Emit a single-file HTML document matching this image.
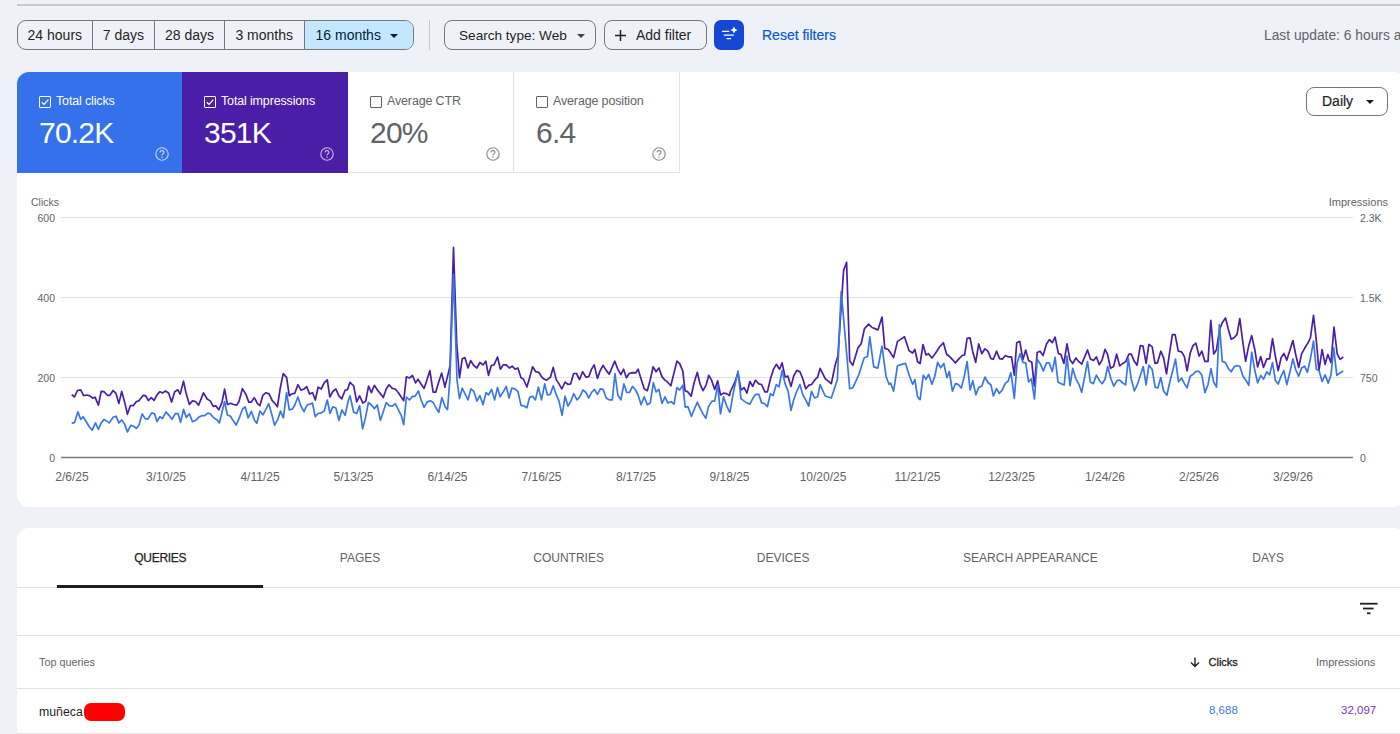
<!DOCTYPE html>
<html><head><meta charset="utf-8">
<style>
*{box-sizing:border-box;margin:0;padding:0}
html,body{width:1400px;height:734px;overflow:hidden;background:#eef1f8;font-family:"Liberation Sans",sans-serif;color:#1f1f1f}
.a{position:absolute}
.topline{left:17px;top:4px;width:1383px;height:2px;background:#c8cbd1}
.seg{left:17px;top:20px;height:30px;width:397px;border:1px solid #747775;border-radius:9px;overflow:hidden;display:flex;background:#eef1f8}
.seg div{height:100%;display:flex;align-items:center;justify-content:center;font-size:14px;color:#1f1f1f;border-right:1px solid #747775}
.seg div:last-child{border-right:none;background:#c2e7ff;color:#001d35}
.vsep{left:429px;top:20px;width:1px;height:30px;background:#c4c7c5}
.btn{top:20px;height:30px;border:1px solid #747775;border-radius:8px;font-size:14px;display:flex;align-items:center;color:#1f1f1f}
.card{left:17px;top:72px;width:1388px;height:435px;background:#fff;border-radius:12px}
.m{top:72px;height:101px;width:166px}
.m .cb{position:absolute;left:22px;top:24px;width:12px;height:12px;border:1.3px solid #fff;border-radius:1px}
.m .lbl{position:absolute;left:39px;top:22px;font-size:12.5px;letter-spacing:-0.15px}
.m .val{position:absolute;left:22px;top:44px;font-size:30px;letter-spacing:-0.8px}
.tab{top:551px;font-size:12px;color:#5f6368;transform:translateX(-50%)}
.hl{height:1px;background:#e3e3e3}
</style></head><body>
<div class="a topline"></div>
<div class="a seg">
  <div style="width:75px">24 hours</div>
  <div style="width:63px">7 days</div>
  <div style="width:70px">28 days</div>
  <div style="width:80px">3 months</div>
  <div style="width:109px;justify-content:flex-start;padding-left:11px">16 months<span style="position:absolute;left:372px;top:13px;width:0;height:0;border-left:4px solid transparent;border-right:4px solid transparent;border-top:4px solid #001d35"></span></div>
</div>
<div class="a vsep"></div>
<div class="a btn" style="left:444px;width:152px;padding-left:14px;font-size:13.6px">Search type: Web<span style="position:absolute;left:132px;top:13px;border-left:4px solid transparent;border-right:4px solid transparent;border-top:4px solid #444"></span></div>
<div class="a btn" style="left:604px;width:103px;padding-left:31px">Add filter<svg style="position:absolute;left:9px;top:8px" width="13" height="13"><path d="M6.5 1 V12 M1 6.5 H12" stroke="#1f1f1f" stroke-width="1.5"/></svg></div>
<div class="a" style="left:714px;top:20px;width:30px;height:30px;border-radius:7px;background:#1447d4"><svg width="30" height="30" style="position:absolute;left:0;top:0"><g stroke="#fff" stroke-width="1.4" stroke-linecap="round"><line x1="8.6" y1="11.4" x2="14.6" y2="11.4"/><line x1="10.3" y1="15.1" x2="19.4" y2="15.1"/><line x1="13.1" y1="18.6" x2="16.6" y2="18.6"/></g><path d="M20 6.4 Q20.6 9.4 23.6 10 Q20.6 10.6 20 13.6 Q19.4 10.6 16.4 10 Q19.4 9.4 20 6.4Z" fill="#fff"/></svg></div>
<div class="a" style="left:762px;top:27px;font-size:14px;color:#0b57d0;-webkit-text-stroke:0.2px #0b57d0">Reset filters</div>
<div class="a" style="left:1264px;top:28px;font-size:13.8px;color:#5f6368;white-space:nowrap">Last update: 6 hours ago</div>

<div class="a card"></div>
<div class="a m" style="left:17px;background:#3571eb;color:#fff;border-top-left-radius:12px">
  <div class="cb"><svg width="10" height="10" style="position:absolute;left:0;top:0" viewBox="0 0 10 10"><path d="M1.8 5.2 L4 7.4 L8.4 2.6" fill="none" stroke="#fff" stroke-width="1.3"/></svg></div><div class="lbl">Total clicks</div><div class="val">70.2K</div><svg class="a" style="left:138px;top:75px" width="14" height="14" viewBox="0 0 14 14"><circle cx="7" cy="7" r="6.2" fill="none" stroke="rgba(255,255,255,0.7)" stroke-width="1.1"/><path d="M5 5.4 Q5 3.6 7 3.6 Q9 3.6 9 5.3 Q9 6.3 7.8 6.9 Q7 7.3 7 8.4" fill="none" stroke="rgba(255,255,255,0.7)" stroke-width="1.1"/><circle cx="7" cy="10.3" r="0.75" fill="rgba(255,255,255,0.7)"/></svg>
</div>
<div class="a m" style="left:182px;background:#4a1ea6;color:#fff">
  <div class="cb"><svg width="10" height="10" style="position:absolute;left:0;top:0" viewBox="0 0 10 10"><path d="M1.8 5.2 L4 7.4 L8.4 2.6" fill="none" stroke="#fff" stroke-width="1.3"/></svg></div><div class="lbl">Total impressions</div><div class="val">351K</div><svg class="a" style="left:138px;top:75px" width="14" height="14" viewBox="0 0 14 14"><circle cx="7" cy="7" r="6.2" fill="none" stroke="rgba(255,255,255,0.7)" stroke-width="1.1"/><path d="M5 5.4 Q5 3.6 7 3.6 Q9 3.6 9 5.3 Q9 6.3 7.8 6.9 Q7 7.3 7 8.4" fill="none" stroke="rgba(255,255,255,0.7)" stroke-width="1.1"/><circle cx="7" cy="10.3" r="0.75" fill="rgba(255,255,255,0.7)"/></svg>
</div>
<div class="a m" style="left:348px;color:#5f6368;border-right:1px solid #e3e3e3;border-bottom:1px solid #e3e3e3">
  <div class="cb" style="border-color:#5f6368"></div><div class="lbl">Average CTR</div><div class="val">20%</div><svg class="a" style="left:138px;top:75px" width="14" height="14" viewBox="0 0 14 14"><circle cx="7" cy="7" r="6.2" fill="none" stroke="#8a8a8a" stroke-width="1.1"/><path d="M5 5.4 Q5 3.6 7 3.6 Q9 3.6 9 5.3 Q9 6.3 7.8 6.9 Q7 7.3 7 8.4" fill="none" stroke="#8a8a8a" stroke-width="1.1"/><circle cx="7" cy="10.3" r="0.75" fill="#8a8a8a"/></svg>
</div>
<div class="a m" style="left:514px;color:#5f6368;border-right:1px solid #e3e3e3;border-bottom:1px solid #e3e3e3">
  <div class="cb" style="border-color:#5f6368"></div><div class="lbl">Average position</div><div class="val">6.4</div><svg class="a" style="left:138px;top:75px" width="14" height="14" viewBox="0 0 14 14"><circle cx="7" cy="7" r="6.2" fill="none" stroke="#8a8a8a" stroke-width="1.1"/><path d="M5 5.4 Q5 3.6 7 3.6 Q9 3.6 9 5.3 Q9 6.3 7.8 6.9 Q7 7.3 7 8.4" fill="none" stroke="#8a8a8a" stroke-width="1.1"/><circle cx="7" cy="10.3" r="0.75" fill="#8a8a8a"/></svg>
</div>
<div class="a btn" style="left:1306px;top:87px;width:82px;height:29px;padding-left:15px;padding-bottom:1px;color:#1f1f1f;-webkit-text-stroke:0.2px #1f1f1f">Daily<span style="position:absolute;left:59px;top:12px;border-left:4.5px solid transparent;border-right:4.5px solid transparent;border-top:4.5px solid #1f1f1f"></span></div>

<svg class="a" style="left:0;top:0" width="1400" height="734">
  <g stroke="#e3e3e3" stroke-width="1">
    <line x1="61" y1="217.5" x2="1353" y2="217.5"/>
    <line x1="61" y1="297.5" x2="1353" y2="297.5"/>
    <line x1="61" y1="377.5" x2="1353" y2="377.5"/>
  </g>
  <line x1="61" y1="457.5" x2="1353" y2="457.5" stroke="#7a7a7a" stroke-width="1.3"/>
  <g font-family="Liberation Sans" font-size="10.5" fill="#5f6368">
    <text x="31" y="206">Clicks</text>
    <text x="1388" y="206" text-anchor="end" font-size="11">Impressions</text>
    <text x="55" y="221.5" text-anchor="end">600</text>
    <text x="55" y="301.5" text-anchor="end">400</text>
    <text x="55" y="381.5" text-anchor="end">200</text>
    <text x="55" y="461.5" text-anchor="end">0</text>
    <text x="1360" y="221.5">2.3K</text>
    <text x="1360" y="301.5">1.5K</text>
    <text x="1360" y="381.5">750</text>
    <text x="1360" y="461.5">0</text>
  </g>
  <g font-family="Liberation Sans" font-size="12" fill="#5f6368" text-anchor="middle"><text x="72" y="481">2/6/25</text><text x="166" y="481">3/10/25</text><text x="260" y="481">4/11/25</text><text x="353.5" y="481">5/13/25</text><text x="447.5" y="481">6/14/25</text><text x="541.5" y="481">7/16/25</text><text x="636" y="481">8/17/25</text><text x="729.5" y="481">9/18/25</text><text x="823" y="481">10/20/25</text><text x="917.5" y="481">11/21/25</text><text x="1011.5" y="481">12/23/25</text><text x="1105" y="481">1/24/26</text><text x="1199" y="481">2/25/26</text><text x="1293" y="481">3/29/26</text></g>
  <path fill="none" stroke="#4a1ea6" stroke-width="1.7" stroke-linejoin="round" d="M71.7 394.6 L74.5 397.0 L77.4 390.5 L80.7 389.8 L83.6 395.7 L87.4 395.0 L90.3 396.2 L92.6 398.1 L95.0 397.2 L98.4 405.1 L101.2 391.4 L104.1 391.7 L107.4 395.3 L109.8 395.3 L113.1 390.5 L116.0 393.4 L118.9 403.4 L121.7 391.4 L124.6 401.9 L127.4 414.3 L130.3 405.7 L133.2 405.7 L136.0 401.9 L138.9 400.7 L143.2 395.3 L145.6 395.7 L148.4 400.5 L151.3 397.6 L154.1 400.3 L157.0 394.8 L159.9 391.7 L160.0 391.7 L162.5 392.9 L165.5 391.1 L168.6 392.9 L171.6 402.1 L174.7 391.7 L177.8 389.8 L180.2 394.1 L183.5 381.2 L186.3 394.1 L189.4 404.5 L192.5 400.9 L195.5 401.5 L198.6 405.1 L203.5 392.9 L207.2 399.0 L210.2 400.9 L213.3 406.4 L215.8 405.8 L218.8 409.8 L221.9 402.7 L224.6 389.2 L227.4 404.5 L230.5 403.3 L233.5 404.5 L236.6 405.1 L239.0 401.5 L242.4 388.6 L245.8 394.1 L248.8 402.1 L251.3 402.1 L254.1 397.8 L255.0 398.8 L257.5 403.7 L259.9 405.6 L263.0 395.1 L266.0 392.7 L269.1 393.9 L272.2 400.7 L274.6 403.1 L277.4 406.8 L280.1 389.0 L283.2 373.7 L286.6 377.4 L289.3 395.8 L291.8 393.9 L294.8 393.3 L297.9 384.7 L301.0 390.2 L304.0 389.0 L306.7 386.6 L309.5 393.9 L312.6 392.7 L315.3 400.0 L318.1 387.2 L321.2 389.0 L324.2 382.9 L327.3 379.8 L329.8 397.0 L332.8 391.5 L335.9 389.0 L338.9 395.8 L341.8 398.8 L345.1 390.2 L347.5 389.6 L350.0 382.3 L353.7 386.0 L356.7 401.9 L359.6 395.8 L362.9 403.1 L365.7 401.3 L368.6 386.0 L371.4 392.7 L374.3 385.3 L377.6 390.2 L380.6 393.9 L383.3 397.6 L386.2 389.0 L389.0 384.7 L392.3 388.4 L395.3 389.0 L398.4 392.7 L401.2 397.0 L403.7 400.7 L406.4 376.8 L409.4 378.0 L412.5 375.5 L415.6 382.9 L418.0 379.2 L421.1 384.1 L424.1 388.4 L427.2 379.2 L429.9 370.6 L433.1 392.1 L435.8 392.1 L438.8 381.7 L441.7 373.1 L445.0 387.2 L445.0 386.4 L447.5 376.6 L450.1 365.5 L453.5 247.4 L456.7 343.0 L459.5 377.8 L462.2 358.8 L464.9 357.6 L468.0 368.0 L470.7 360.6 L473.8 365.5 L476.9 368.0 L479.9 362.5 L483.0 364.9 L485.8 361.2 L488.5 375.3 L491.3 365.5 L494.0 364.9 L497.5 357.0 L500.4 369.2 L503.2 364.9 L506.3 364.9 L509.3 368.0 L512.2 366.2 L515.1 369.2 L517.9 368.0 L521.0 377.8 L523.4 379.0 L526.9 387.0 L529.6 377.8 L532.6 366.8 L535.7 371.7 L538.8 372.3 L541.8 377.2 L543.1 378.4 L546.7 380.2 L550.4 377.2 L553.2 367.4 L556.2 379.6 L559.0 383.9 L561.8 388.8 L565.1 382.1 L568.2 384.5 L570.6 383.9 L573.7 373.5 L576.5 373.5 L579.5 379.6 L582.6 371.7 L586.0 377.2 L588.8 376.6 L591.5 369.2 L594.2 364.9 L597.4 378.4 L600.3 370.4 L603.1 365.5 L606.2 370.4 L609.2 374.1 L612.1 367.4 L614.8 361.2 L617.8 369.2 L620.9 374.7 L623.6 369.2 L626.4 377.8 L629.2 373.5 L632.2 372.6 L635.6 372.9 L638.1 369.2 L641.1 379.0 L644.2 388.8 L647.3 390.7 L650.3 379.6 L653.1 366.8 L656.1 371.7 L658.9 368.0 L662.0 376.6 L665.0 380.2 L668.1 382.7 L670.8 385.8 L674.0 372.9 L676.9 361.2 L679.7 363.7 L682.8 371.1 L685.0 390.7 L687.9 391.9 L691.1 396.2 L694.1 382.7 L697.3 372.3 L700.0 383.9 L703.0 390.7 L706.1 385.1 L708.8 375.3 L711.6 380.2 L714.7 389.4 L717.7 380.9 L720.5 395.0 L723.5 393.1 L726.7 393.7 L729.6 395.6 L730.0 392.5 L734.9 382.1 L738.0 372.9 L741.0 390.0 L744.1 387.6 L746.9 393.1 L749.9 381.5 L752.7 386.4 L755.5 380.2 L758.8 383.9 L761.6 384.5 L764.9 391.9 L767.4 391.9 L770.4 379.0 L773.5 369.2 L776.3 364.3 L779.6 369.2 L782.1 362.8 L785.1 377.2 L787.8 376.0 L791.0 386.4 L793.7 376.0 L796.8 370.4 L799.9 371.7 L802.9 379.0 L805.7 388.8 L809.0 385.1 L811.5 384.5 L814.6 380.2 L817.6 377.2 L820.1 368.4 L825.2 378.6 L831.3 383.7 L835.4 364.3 L837.9 356.0 L843.6 270.4 L846.6 262.2 L849.7 361.0 L852.8 365.3 L857.9 348.0 L860.9 343.9 L861.2 343.8 L864.4 328.7 L868.6 324.1 L872.1 327.5 L877.9 329.9 L882.0 317.1 L884.8 348.4 L888.3 349.5 L893.6 357.6 L897.5 341.4 L901.0 339.1 L904.5 336.8 L909.1 350.7 L912.6 353.0 L914.9 349.5 L917.2 360.0 L917.5 361.7 L920.1 363.5 L923.0 344.5 L926.0 354.9 L928.5 353.7 L931.9 358.0 L935.2 353.7 L939.5 347.0 L943.4 342.7 L946.6 354.3 L949.9 356.8 L952.7 359.8 L955.4 362.9 L959.1 358.6 L962.2 355.5 L964.6 354.9 L967.1 338.4 L970.1 337.8 L972.8 351.9 L975.7 362.3 L978.7 343.9 L981.8 353.7 L984.9 348.8 L987.9 351.2 L991.0 358.6 L993.4 359.2 L996.5 351.2 L999.6 358.6 L1002.3 359.2 L1005.4 355.5 L1008.1 356.8 L1010.8 356.8 L1011.5 356.8 L1014.3 375.1 L1016.7 342.7 L1019.8 341.4 L1022.9 359.8 L1025.7 350.0 L1028.6 360.4 L1031.8 362.3 L1034.3 386.2 L1037.2 352.5 L1040.0 351.2 L1043.1 355.5 L1046.5 343.9 L1049.5 339.6 L1052.3 342.7 L1055.1 337.2 L1058.4 353.7 L1060.9 354.3 L1063.9 363.5 L1067.0 343.9 L1070.0 359.8 L1072.7 363.5 L1075.9 358.0 L1078.9 361.7 L1081.7 364.1 L1084.5 357.4 L1087.5 350.0 L1090.6 359.2 L1093.6 360.4 L1096.4 356.8 L1099.2 364.7 L1101.9 360.4 L1105.0 349.4 L1105.0 349.3 L1107.5 354.2 L1110.5 368.3 L1113.6 366.5 L1116.6 354.2 L1119.7 365.9 L1122.8 363.4 L1125.8 361.6 L1128.9 354.2 L1131.3 354.2 L1134.4 361.6 L1137.1 365.2 L1140.3 345.6 L1143.0 346.2 L1146.1 363.4 L1148.9 344.4 L1152.2 346.9 L1155.0 363.4 L1157.5 362.8 L1160.8 351.2 L1163.6 357.9 L1166.5 373.8 L1169.7 351.8 L1172.4 334.6 L1175.1 334.6 L1178.3 351.2 L1181.6 351.8 L1184.4 356.7 L1187.1 370.8 L1190.2 353.0 L1193.0 345.6 L1195.9 343.2 L1199.1 356.1 L1201.8 351.2 L1201.8 351.0 L1204.9 361.4 L1208.0 361.4 L1210.8 320.3 L1213.7 354.0 L1216.5 349.7 L1219.6 329.5 L1222.3 322.8 L1225.5 317.9 L1228.4 329.5 L1231.2 339.3 L1234.3 337.5 L1237.0 334.4 L1239.8 318.5 L1242.6 340.5 L1245.6 361.4 L1248.8 345.4 L1251.7 335.6 L1254.9 350.3 L1257.6 366.9 L1260.7 356.5 L1263.5 367.5 L1266.8 358.9 L1269.6 358.9 L1272.5 338.7 L1275.4 356.5 L1278.2 370.6 L1281.1 357.7 L1283.9 353.4 L1286.8 360.1 L1289.5 351.6 L1292.9 340.5 L1295.6 354.0 L1298.7 367.5 L1301.6 353.9 L1304.9 347.8 L1308.0 342.9 L1310.4 338.0 L1313.5 315.3 L1316.3 340.4 L1319.0 370.5 L1322.1 349.6 L1325.1 364.3 L1327.8 354.5 L1331.0 362.5 L1334.0 327.0 L1337.2 353.9 L1340.1 359.4 L1343.3 357.0"/>
  <path fill="none" stroke="#3a76e6" stroke-width="1.7" stroke-linejoin="round" d="M71.7 423.2 L74.5 422.6 L77.9 411.9 L80.7 419.4 L83.1 416.7 L86.4 422.0 L89.3 426.7 L92.2 430.1 L95.5 422.9 L98.4 429.3 L101.2 422.9 L104.1 419.4 L109.3 422.9 L113.1 417.2 L116.0 416.2 L118.9 422.9 L121.7 420.0 L124.6 423.9 L127.4 432.0 L130.8 425.3 L133.6 426.2 L136.5 428.3 L138.9 425.3 L142.2 413.9 L145.1 418.6 L147.9 419.1 L151.7 412.9 L154.6 413.9 L157.0 421.5 L159.9 416.7 L160.0 416.8 L162.5 418.6 L165.9 411.9 L169.2 415.6 L172.0 419.2 L175.3 413.7 L178.1 413.7 L180.6 422.3 L183.5 409.4 L186.3 417.4 L189.4 413.7 L192.5 421.7 L196.2 419.9 L199.2 416.8 L202.3 415.6 L204.7 415.6 L207.8 413.1 L210.2 413.7 L213.9 418.0 L217.0 419.9 L219.4 422.9 L221.9 412.5 L224.6 401.5 L227.4 415.0 L230.5 416.2 L233.5 421.1 L236.2 425.0 L239.7 416.8 L242.7 408.8 L245.2 407.0 L248.2 418.0 L251.3 411.3 L254.4 419.9 L255.0 420.9 L256.8 423.3 L259.9 411.1 L263.0 414.8 L266.0 409.2 L268.8 403.7 L271.9 414.8 L274.6 425.2 L277.7 419.7 L280.5 411.1 L283.4 417.8 L286.6 392.7 L289.3 409.9 L292.4 409.2 L294.8 405.0 L297.9 397.0 L301.0 406.2 L304.0 411.7 L307.1 405.0 L309.5 404.3 L312.4 403.1 L315.3 416.6 L318.1 413.5 L321.2 412.9 L324.2 411.1 L327.3 400.0 L330.0 413.5 L332.8 406.8 L335.9 408.0 L338.9 420.3 L342.0 409.9 L345.1 415.4 L348.1 401.3 L350.0 395.8 L353.7 412.3 L356.7 413.5 L359.6 405.6 L362.6 428.8 L365.3 418.4 L368.4 402.5 L371.4 405.0 L374.5 408.6 L377.2 405.0 L380.4 420.3 L383.3 411.7 L386.2 402.5 L389.2 405.6 L392.3 406.2 L395.3 403.7 L398.4 409.9 L401.2 415.4 L403.7 424.6 L406.4 397.0 L409.4 400.0 L412.5 396.4 L415.0 396.4 L418.4 390.9 L421.1 400.0 L424.1 407.4 L427.2 401.9 L430.3 400.7 L433.3 402.5 L436.0 408.0 L438.8 412.3 L441.9 397.6 L445.0 406.2 L445.0 406.6 L447.5 409.7 L449.9 379.0 L453.5 274.3 L457.0 380.0 L459.5 398.6 L462.2 388.2 L464.9 393.7 L468.0 399.9 L471.0 388.8 L473.8 391.3 L476.9 401.1 L479.9 395.6 L483.0 404.8 L486.1 392.5 L488.5 395.0 L491.6 389.4 L494.6 399.9 L497.5 387.6 L500.1 396.8 L503.2 391.9 L506.3 386.4 L509.0 398.0 L511.8 388.2 L514.9 388.8 L517.9 391.3 L521.0 405.4 L524.0 406.0 L526.9 407.8 L529.6 397.4 L532.6 396.2 L535.4 399.9 L538.4 387.0 L541.5 399.9 L544.7 383.9 L547.4 395.0 L550.4 394.3 L553.2 385.8 L555.9 393.7 L559.0 401.1 L562.1 415.2 L565.1 396.2 L567.9 406.0 L570.9 401.1 L573.7 393.7 L577.0 399.9 L579.8 396.8 L582.9 390.0 L586.0 392.5 L588.8 398.0 L591.5 392.5 L594.5 389.4 L597.4 394.3 L600.3 388.8 L603.1 389.4 L606.2 398.0 L609.2 399.9 L612.3 399.9 L615.0 373.5 L617.8 395.0 L620.9 399.9 L623.9 383.9 L626.8 392.5 L629.5 392.5 L632.5 386.4 L635.6 390.0 L638.1 395.0 L641.1 404.8 L644.2 396.8 L647.3 404.8 L650.3 402.9 L653.4 382.7 L656.1 391.9 L658.9 389.4 L662.0 403.5 L665.0 396.8 L667.8 402.9 L671.2 401.7 L674.0 404.1 L676.9 387.6 L679.7 390.0 L682.8 385.1 L685.2 407.2 L687.9 406.6 L691.4 416.4 L694.4 409.0 L697.3 402.3 L700.2 408.4 L703.0 413.9 L705.8 418.2 L708.5 406.6 L712.0 401.1 L714.7 401.1 L717.7 385.1 L720.5 413.9 L723.5 396.8 L726.7 406.0 L729.6 412.1 L730.0 412.1 L733.1 393.7 L738.0 371.1 L741.0 398.6 L744.1 401.1 L746.9 402.9 L749.9 404.1 L752.7 398.6 L755.7 394.3 L758.8 394.3 L761.6 402.9 L764.3 403.5 L767.4 406.6 L770.4 393.7 L773.1 395.6 L776.3 384.5 L779.0 387.0 L782.1 370.4 L785.1 383.9 L788.2 391.3 L791.0 410.3 L793.7 399.9 L796.8 391.3 L799.9 384.5 L802.9 395.0 L805.7 399.9 L808.7 406.0 L811.5 391.3 L814.6 398.0 L817.6 396.8 L820.1 384.7 L825.2 396.0 L831.3 398.0 L837.4 379.6 L841.1 291.8 L842.6 307.0 L849.7 388.8 L852.8 387.8 L858.9 374.5 L864.0 358.2 L865.1 357.6 L867.5 356.5 L869.8 336.8 L873.7 366.9 L877.9 368.1 L882.0 346.1 L886.0 376.2 L889.0 384.3 L890.6 383.1 L893.6 391.2 L897.5 365.7 L901.0 364.6 L905.6 363.4 L909.1 375.0 L912.6 384.3 L914.9 379.6 L917.5 396.6 L920.1 399.7 L923.3 375.1 L926.0 379.4 L928.7 374.5 L931.9 384.3 L934.6 377.0 L937.7 362.3 L940.7 367.8 L943.8 363.5 L946.9 377.6 L949.3 371.5 L952.4 391.1 L955.4 383.7 L958.1 384.3 L961.3 388.0 L964.0 377.6 L967.1 361.7 L970.1 389.9 L972.8 380.7 L975.9 394.8 L978.7 387.4 L981.8 386.2 L984.9 377.0 L987.9 382.5 L991.0 385.0 L993.4 396.0 L996.5 388.6 L999.3 393.5 L1002.3 389.9 L1005.4 383.1 L1008.1 381.3 L1010.8 372.7 L1011.5 376.4 L1014.3 398.4 L1017.1 362.9 L1020.0 353.7 L1022.9 362.3 L1025.7 362.9 L1028.6 381.9 L1031.4 378.8 L1034.5 399.0 L1037.2 359.2 L1040.4 364.1 L1043.3 370.9 L1046.5 362.9 L1049.2 362.9 L1052.3 371.5 L1055.1 357.4 L1058.0 381.9 L1061.2 383.7 L1064.2 385.0 L1067.0 356.2 L1070.0 385.6 L1072.7 368.4 L1075.9 378.8 L1078.9 384.3 L1081.7 392.3 L1084.5 377.6 L1087.5 361.7 L1090.3 381.9 L1093.3 383.7 L1096.4 375.1 L1099.5 380.7 L1102.2 383.7 L1105.0 379.3 L1107.7 366.5 L1110.9 378.7 L1113.8 386.1 L1117.0 380.6 L1119.5 380.0 L1122.8 383.0 L1125.6 384.9 L1128.3 358.5 L1131.3 379.3 L1134.4 391.0 L1137.5 384.2 L1140.5 375.0 L1143.2 366.5 L1146.1 384.9 L1148.9 365.2 L1152.2 369.5 L1155.2 387.3 L1157.9 387.9 L1160.8 377.5 L1163.6 391.0 L1166.9 395.3 L1169.7 382.4 L1173.0 369.5 L1175.5 359.1 L1178.5 381.8 L1181.6 378.1 L1184.4 383.6 L1187.1 387.9 L1190.2 376.3 L1193.0 374.4 L1195.9 371.4 L1199.1 371.4 L1201.8 374.9 L1204.9 392.6 L1208.0 384.7 L1211.0 368.7 L1213.7 382.2 L1216.5 387.1 L1219.4 324.6 L1222.3 361.4 L1225.5 362.6 L1228.4 368.7 L1231.2 371.8 L1234.6 366.3 L1237.4 365.7 L1239.8 366.3 L1242.9 376.1 L1246.0 380.4 L1248.8 385.3 L1251.7 352.2 L1254.5 368.7 L1257.6 382.8 L1260.7 375.5 L1263.5 379.1 L1266.8 371.8 L1269.6 374.9 L1272.5 362.6 L1275.4 380.4 L1278.2 384.0 L1281.1 376.1 L1283.9 370.6 L1286.8 384.7 L1290.1 371.2 L1292.9 358.9 L1295.8 370.0 L1298.7 376.1 L1301.6 368.0 L1304.6 366.2 L1307.4 372.3 L1310.4 358.8 L1313.5 341.1 L1316.3 369.2 L1319.0 370.5 L1322.1 381.5 L1325.1 374.8 L1328.2 383.3 L1331.0 374.8 L1333.7 347.8 L1336.8 375.4 L1339.9 372.9 L1343.3 371.1"/>
</svg>

<div class="a" style="left:17px;top:528px;width:1388px;height:260px;background:#fff;border-radius:12px"></div>
<div class="a tab" style="left:160.3px;color:#1f1f1f;-webkit-text-stroke:0.25px #1f1f1f;letter-spacing:-0.3px">QUERIES</div>
<div class="a tab" style="left:360px">PAGES</div>
<div class="a tab" style="left:568.6px">COUNTRIES</div>
<div class="a tab" style="left:783.2px">DEVICES</div>
<div class="a tab" style="left:1030.4px">SEARCH APPEARANCE</div>
<div class="a tab" style="left:1268.2px">DAYS</div>
<div class="a hl" style="left:17px;top:587px;width:1383px"></div>
<div class="a" style="left:57px;top:585px;width:206px;height:2.5px;background:#1f1f1f"></div>
<div class="a hl" style="left:17px;top:635px;width:1383px"></div>
<div class="a hl" style="left:17px;top:688px;width:1383px"></div>
<div class="a hl" style="left:17px;top:733px;width:1383px"></div>
<svg class="a" style="left:1359px;top:602px" width="20" height="14"><g fill="#1f1f1f"><rect x="1" y="0.8" width="17.5" height="1.8"/><rect x="4" y="5.6" width="10.6" height="1.8"/><rect x="8" y="10.4" width="3.5" height="1.8"/></g></svg>
<div class="a" style="left:39px;top:656px;font-size:10.8px;color:#5f6368">Top queries</div>
<svg class="a" style="left:1189px;top:656px" width="12" height="12" viewBox="0 0 12 12"><path d="M6 1.5 V10.5 M2 6.6 L6 10.6 L10 6.6" fill="none" stroke="#1f1f1f" stroke-width="1.4"/></svg>
<div class="a" style="left:1208.5px;top:656px;font-size:11px;color:#1f1f1f;-webkit-text-stroke:0.3px #1f1f1f">Clicks</div>
<div class="a" style="left:1316px;top:656px;font-size:11px;color:#5f6368">Impressions</div>
<div class="a" style="left:39px;top:704.5px;font-size:12.3px;color:#1f1f1f">muñeca</div>
<div class="a" style="left:84px;top:703px;width:41px;height:18px;background:#ff0000;border-radius:7px"></div>
<div class="a" style="left:1209px;top:704px;font-size:11.5px;color:#3f7ad6">8,688</div>
<div class="a" style="left:1341px;top:704px;font-size:11.5px;color:#7e35b8">32,097</div>
</body></html>
